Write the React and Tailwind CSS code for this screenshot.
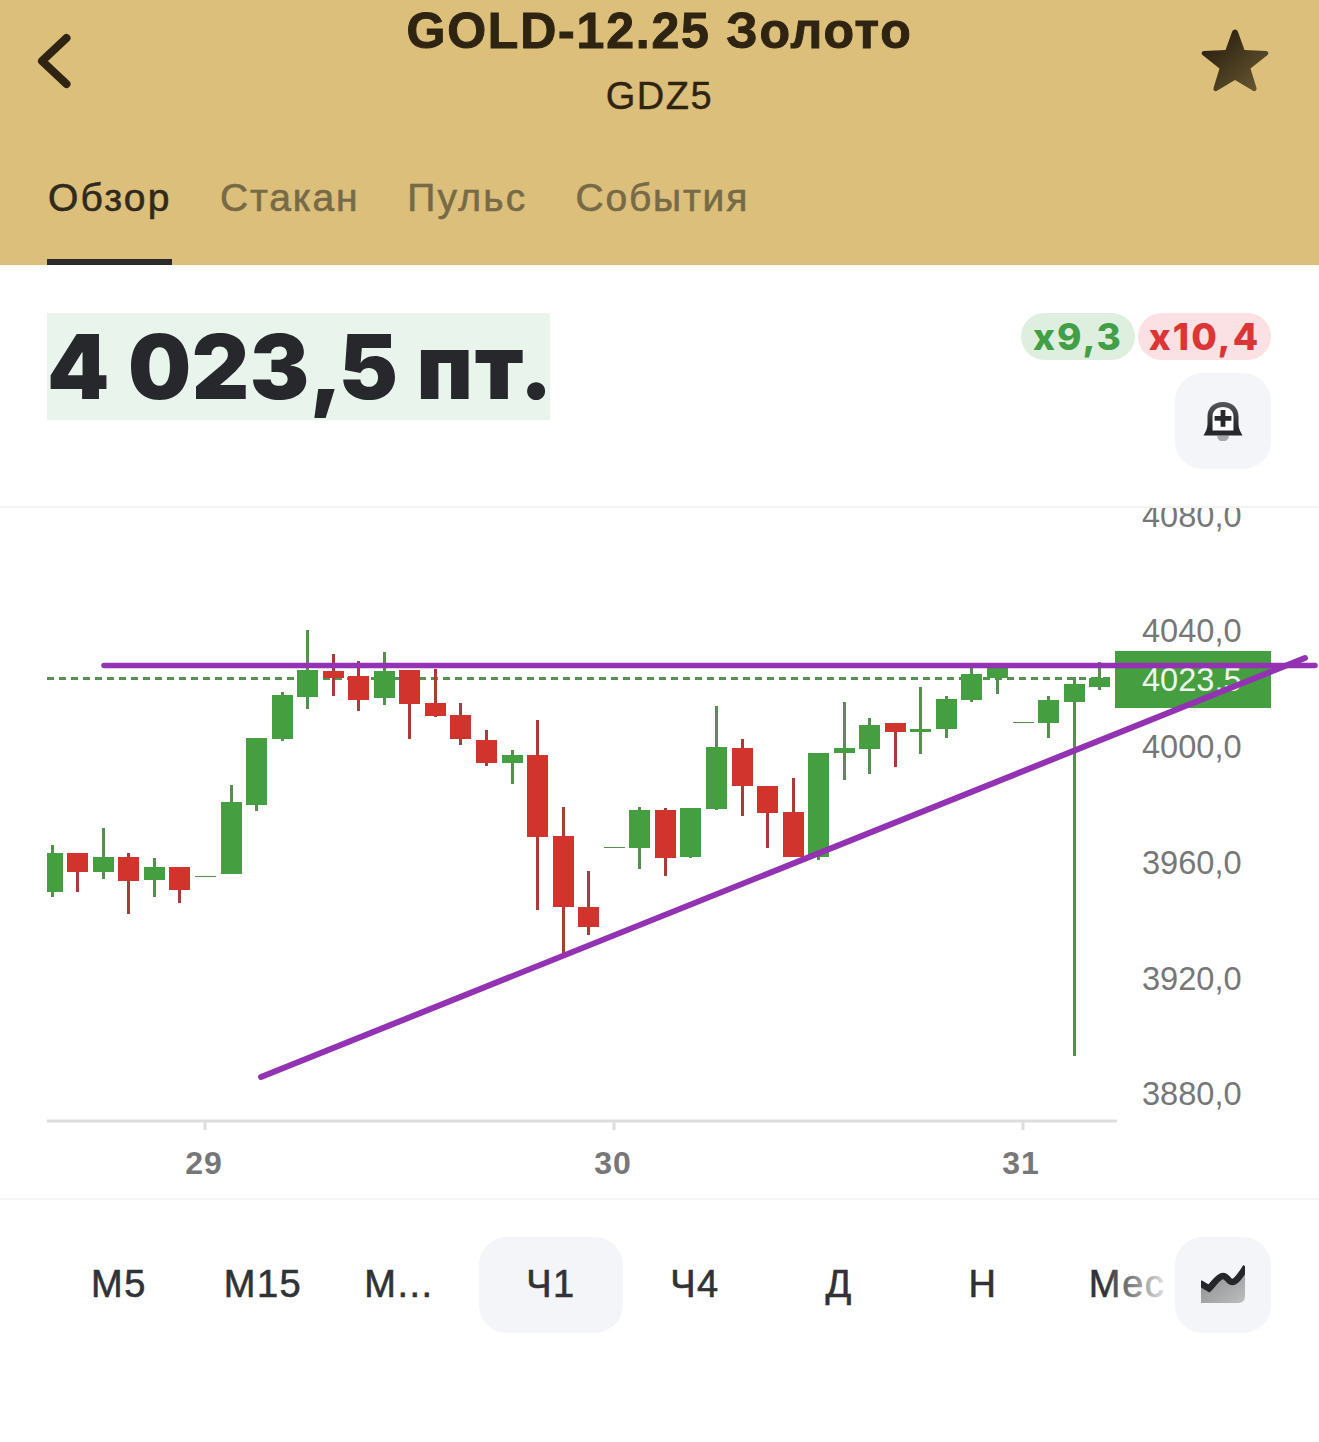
const G = "#459f41";
const R = "#d0342c";
const GW = "#55904f";
const RW = "#aa3c38";
// x, bodyTop, bodyBottom, wickTop, wickBottom, colour ("g", "r", or "t" for a flat dash)
const CANDLES = [
  [47, 853, 892, 845, 897, "g", 16], [67, 853, 872, 853, 892, "r"], [93, 857, 872, 828, 879, "g"],
  [118, 857, 881, 853, 914, "r"], [144, 867, 880, 858, 897, "g"], [169, 867, 890, 867, 903, "r"],
  [195, 876, 876, 876, 876, "t"], [221, 802, 874, 785, 874, "g"], [246, 738, 805, 738, 811, "g"],
  [272, 695, 739, 692, 741, "g"], [297, 670, 697, 630, 709, "g"], [323, 671, 678, 654, 696, "r"],
  [348, 676, 700, 661, 711, "r"], [374, 671, 698, 652, 705, "g"], [399, 670, 704, 670, 739, "r"],
  [425, 703, 716, 669, 717, "r"], [450, 715, 739, 703, 745, "r"], [476, 740, 763, 730, 766, "r"],
  [502, 755, 763, 750, 784, "g"], [527, 755, 837, 720, 910, "r"], [553, 836, 907, 807, 955, "r"],
  [578, 907, 927, 871, 935, "r"], [604, 847, 847, 847, 847, "t"], [629, 810, 848, 807, 869, "g"],
  [655, 810, 858, 808, 876, "r"], [680, 808, 857, 808, 858, "g"], [706, 747, 809, 706, 810, "g"],
  [732, 748, 786, 739, 816, "r"], [757, 786, 813, 786, 848, "r"], [783, 812, 857, 778, 857, "r"],
  [808, 753, 857, 753, 860, "g"], [834, 748, 753, 702, 780, "g"], [859, 725, 749, 718, 774, "g"],
  [885, 723, 732, 723, 767, "r"], [910, 729, 732, 687, 754, "g"], [936, 699, 729, 696, 738, "g"],
  [961, 674, 700, 665, 702, "g"], [987, 665, 678, 664, 694, "g"], [1013, 722, 722, 722, 722, "t"],
  [1038, 700, 723, 696, 738, "g"], [1064, 684, 702, 677, 1056, "g"], [1089, 678, 687, 662, 690, "g"],
];
const PRICES = [["4080,0", 527], ["4040,0", 642], ["4000,0", 758], ["3960,0", 874], ["3920,0", 990], ["3880,0", 1105]];
const DAYS = [["29", 205, 204], ["30", 614, 613], ["31", 1023, 1021]];
const CHART_TOP = 508;

function Chart() {
  return (
    <svg width="1319" height="690" viewBox={`0 ${CHART_TOP} 1319 690`} className="block" style={{ fontFamily: "'Liberation Sans', Arial, sans-serif" }}>
      {PRICES.map(([t, y]) => (
        <text key={t} x="1142" y={y} fontSize="32.6" fill="#777777">{t}</text>
      ))}
      <line x1="47" y1="678.5" x2="1115" y2="678.5" stroke={GW} strokeWidth="3" strokeDasharray="7 5" />
      {CANDLES.map(([x, top, bot, wt, wb, c, w = 21]) => {
        if (c === "t") return <line key={x} x1={x} x2={x + 21} y1={top + 0.5} y2={top + 0.5} stroke={GW} strokeWidth="1" />;
        const cx = x === 47 ? 52.5 : x + 10.5;
        return (
          <g key={x}>
            <line x1={cx} x2={cx} y1={wt} y2={wb} stroke={c === "g" ? GW : RW} strokeWidth="3" />
            <rect x={x} y={top} width={w} height={bot - top} fill={c === "g" ? G : R} />
          </g>
        );
      })}
      <rect x="1115" y="651" width="156" height="57" fill={G} />
      <text x="1142" y="691" fontSize="32.6" fill="#ecf5ea">4023,5</text>
      <line x1="47" y1="1121" x2="1117" y2="1121" stroke="#dddddd" strokeWidth="3" />
      {DAYS.map(([t, tick, cx]) => (
        <g key={t}>
          <line x1={tick} x2={tick} y1="1121" y2="1130" stroke="#dddddd" strokeWidth="3" />
          <text x={cx} y="1174" fontSize="32" fontWeight="700" letterSpacing="1" fill="#777777" textAnchor="middle">{t}</text>
        </g>
      ))}
      <line x1="104" y1="665.5" x2="1315" y2="665.5" stroke="#9333b3" strokeWidth="5.5" strokeLinecap="round" />
      <line x1="261" y1="1077" x2="1305" y2="658" stroke="#9333b3" strokeWidth="6" strokeLinecap="round" />
    </svg>
  );
}

function Star() {
  return (
    <svg width="68" height="64" viewBox="0 0 68 64">
      <defs>
        <linearGradient id="starFill" x1="0" y1="0" x2="1" y2="1">
          <stop offset="0.2" stopColor="#2f2412" />
          <stop offset="1" stopColor="#6d5c35" />
        </linearGradient>
      </defs>
      <path d="M34 1.5 C35.5 1.5 36.5 2.5 37 4 L43.5 22 L65 23 C67.5 23.2 68 25.5 66.5 27 L49.5 40.5 L55.5 60 C56 62.5 54 64 52 62.8 L34 52 L16 62.8 C14 64 12 62.5 12.5 60 L18.5 40.5 L1.5 27 C0 25.5 .5 23.2 3 23 L24.5 22 L31 4 C31.5 2.5 32.5 1.5 34 1.5 Z" fill="url(#starFill)" />
    </svg>
  );
}

function Bell() {
  return (
    <svg width="40" height="40" viewBox="0 0 40 40">
      <defs>
        <linearGradient id="bellFill" x1="0" y1="0" x2="0" y2="1">
          <stop offset="0" stopColor="#55575b" />
          <stop offset="0.75" stopColor="#26282c" />
        </linearGradient>
      </defs>
      <path d="M14 34 a6 6 0 0 0 12 0 Z" transform="translate(0 0.5)" fill="#a5a7aa" />
      <path d="M20 7 C13 7 10 11 10 16 L10 30 L30 30 L30 16 C30 11 27 7 20 7 Z" fill="#ffffff" />
      <path d="M20 1 C10 1 4.5 7.5 4.5 15.5 L4.5 23 C4.5 27.5 2.5 31 0.5 34.5 L39.5 34.5 C37.5 31 35.5 27.5 35.5 23 L35.5 15.5 C35.5 7.5 30 1 20 1 Z M20 6 C26.5 6 30.5 10 30.5 15.5 L30.5 29.5 L9.5 29.5 L9.5 15.5 C9.5 10 13.5 6 20 6 Z" fill="url(#bellFill)" fillRule="evenodd" />
      <path d="M17.6 9 h4.8 v6 h6 v4.8 h-6 v6 h-4.8 v-6 h-6 v-4.8 h6 Z" fill="#26282c" />
    </svg>
  );
}

function ChartType() {
  return (
    <svg width="44" height="40" viewBox="1 0 44 40">
      <defs>
        <linearGradient id="areaFill" x1="0" y1="0" x2="1" y2="1">
          <stop offset="0" stopColor="#8a8b8d" />
          <stop offset="1" stopColor="#bcbdbf" />
        </linearGradient>
      </defs>
      <path d="M1 20 L9 25 L23 12 L32 18 L45 5 L45 31 Q45 38 38 38 L1 38 Z" fill="url(#areaFill)" />
      <path d="M0 18 L9 23.5 C13 20 18 11 23 11 C27 11 29 17 32 17 C37 17 41 9 46 2" fill="none" stroke="#26272b" strokeWidth="6.5" />
    </svg>
  );
}

const PERIODS = ["М5", "М15", "М...", "Ч1", "Ч4", "Д", "Н", "Мес"];
const TABS = [["Стакан", "tracking-[1.8px]"], ["Пульс", "tracking-[2.2px]"], ["События", "tracking-[1.8px]"]];

export default function App() {
  return (
    <div className="w-[1319px] h-[1442px] bg-white overflow-hidden font-['Liberation_Sans',Arial,sans-serif]">
      <header className="h-[265px] bg-[#dbbf7a] text-[#2f2412] flex flex-col">
        <div className="relative h-[140px] flex flex-col items-center">
          <h1 className="mt-[2px] text-[50px] leading-[58px] font-bold tracking-[1.8px] [-webkit-text-stroke:1px_#2f2412]">GOLD-12.25 Золото</h1>
          <p className="mt-[14px] text-[38px] leading-[44px] tracking-[1.5px] [-webkit-text-stroke:0.4px_#2f2412]">GDZ5</p>
          <svg className="absolute left-[36px] top-[33px]" width="36" height="56" viewBox="0 0 36 56">
            <path d="M30.5 5 L6 28 L30.5 51" fill="none" stroke="#2f2412" strokeWidth="8" strokeLinecap="round" strokeLinejoin="round" />
          </svg>
          <div className="absolute left-[1201px] top-[28px]"><Star /></div>
        </div>
        <nav className="flex-1 flex gap-[48px] pl-[47px] text-[39px]">
          <div className="w-[125px] pl-px tracking-[2.2px] h-full pt-[35px] leading-[46px] text-[#2f2a1c] border-b-[6px] border-[#2b2b2b] [-webkit-text-stroke:0.6px_#2f2a1c]">Обзор</div>
          {TABS.map(([t, track]) => (
            <div key={t} className={"h-full pt-[35px] leading-[46px] text-[#776a47] [-webkit-text-stroke:0.6px_#776a47] " + track}>{t}</div>
          ))}
        </nav>
      </header>

      <section className="h-[243px] border-b-[2px] border-[#f3f3f3] pt-[48px] pl-[47px] pr-[48px] flex justify-between items-start">
        <div className="h-[107px] bg-[#e9f5ec] text-[#26282b] text-[89px] leading-[107px] font-black font-['Inter',sans-serif] tracking-[0.4px] whitespace-nowrap w-[503px]">4 023<span className="tracking-[-4px]">,</span>5 <span className="tracking-[1.7px]">пт.</span></div>
        <div className="flex flex-col items-end gap-[13px]">
          <div className="flex gap-[3px] text-[37px] leading-[47px] font-extrabold font-['Inter',sans-serif] tracking-[2px]">
            <span className="h-[47px] w-[114px] rounded-full bg-[#deefe0] text-[#439f46] text-center">x9,3</span>
            <span className="h-[47px] w-[133px] rounded-full bg-[#fbe1e3] text-[#dc3535] text-center">x10,4</span>
          </div>
          <button className="w-[96px] h-[96px] rounded-[28px] bg-[#f3f5f8] flex items-center justify-center"><Bell /></button>
        </div>
      </section>

      <Chart />

      <section className="border-t-[2px] border-[#f3f3f3] pt-[37px] pl-[47px] pr-[48px] flex">
        <div className="relative flex w-[1128px] text-[38px] leading-[94px] text-[#303236] tracking-[1.5px] [-webkit-text-stroke:0.6px_#303236]">
          {PERIODS.map((p, i) => (
            <div key={p} className={"w-[144px] h-[96px] shrink-0 text-center " + (i === 2 ? "pr-[16px] " : "") + (i === 3 ? "rounded-[28px] bg-[#f3f5f8]" : "")}>{p}</div>
          ))}
          <div className="absolute right-0 top-0 w-[70px] h-[96px] bg-gradient-to-r from-transparent to-white" />
        </div>
        <button className="w-[96px] h-[96px] rounded-[28px] bg-[#f3f5f8] flex items-center justify-center"><ChartType /></button>
      </section>
    </div>
  );
}
